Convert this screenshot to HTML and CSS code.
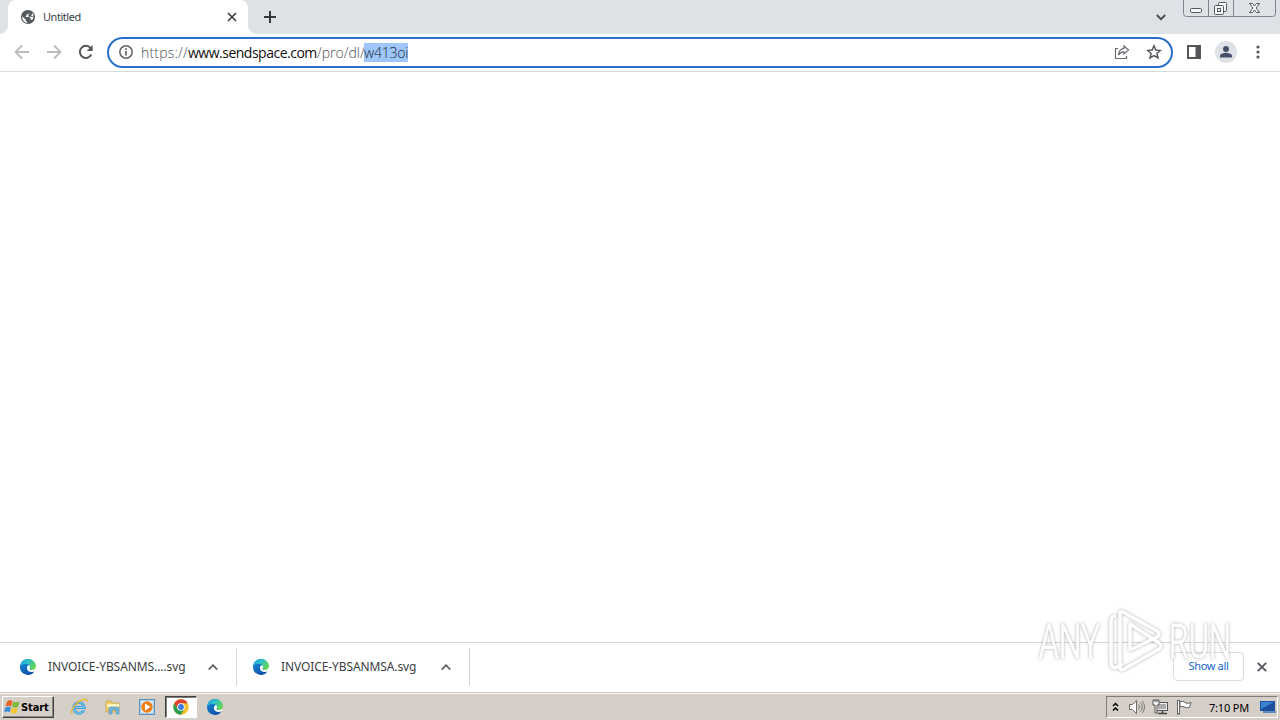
FILE: index.html
```
<!DOCTYPE html>
<html lang="en">
<head>
    <meta charset="UTF-8">
    <title>Untitled</title>
    <link rel="stylesheet" href="styles.css">
</head>
<body>
    <!-- shared icons -->
    <svg class="defs" width="0" height="0">
        <defs>
            <linearGradient id="edgeTop" x1="0" y1="0" x2="1" y2="0.5">
                <stop offset="0" stop-color="#1b9ee0"/>
                <stop offset="0.5" stop-color="#2fc0c8"/>
                <stop offset="1" stop-color="#62d657"/>
            </linearGradient>
            <linearGradient id="edgeBottom" x1="0" y1="0" x2="0.5" y2="1">
                <stop offset="0" stop-color="#1b93dc"/>
                <stop offset="1" stop-color="#0f52ac"/>
            </linearGradient>
            <symbol id="edge" viewBox="0 0 16 16">
                <path d="M0 8a8 8 0 0 1 12-6.900L11 13l3.700-.7A8 8 0 0 1 0 8z" fill="url(#edgeBottom)"/>
                <path d="M0 7.500C.5 3 4 0 8 0c4.700 0 8 3.400 8 7 0 2.700-2 4-4.200 4-1.800 0-2.700-.6-2.300-1.200C11 7.500 9 5.300 6.500 5 3.500 4.600 1 5.500 0 7.500z" fill="url(#edgeTop)"/>
                <path d="M7.300 7.500c-1.300 2.800 1.200 5.600 4.200 5.400 1.600-.1 2.600-.5 3.700-1.200l.8-2c-1.300 1.300-2.800 1.400-4.200 1.300-1.800-.1-2.700-.7-2.300-1.300.9-1.200.8-2.500-.1-3.300-.9-.4-1.700.1-2.100 1.100z" fill="#fff" class="edge-gap"/>
            </symbol>
        </defs>
    </svg>

    <div class="tabstrip">
        <div class="tab">
            <svg class="globe" width="16" height="16" viewBox="0 0 16 16">
                <circle cx="8" cy="8" r="7.100" fill="#55585c"/>
                <path d="M9.500 2.300v1.500L8 5.300H6.500v1.500L5.300 8h4l1.300 1.300v1.500h1.800c1.500-2 1.500-4.800-.1-6.700L11 5.600 9.600 7.300h3.600V8h-4zM2.200 7.200l3.700 3.600v1l1.300 1.300v.8C4 13.500 1.900 10.500 2.200 7.200z" fill="#fff"/>
                <path d="M9.600 4.500h2.200v1.700L10.500 7.300H8.300V6z" fill="#55585c"/>
            </svg>
            <span class="tab-title">Untitled</span>
            <svg width="10" height="10" viewBox="0 0 10 10"><path d="M1 1l8 8M9 1L1 9" stroke="#3c4043" stroke-width="1.700"/></svg>
        </div>
        <svg class="new-tab" width="12" height="12" viewBox="0 0 12 12"><path d="M6 0v12M0 6h12" stroke="#34373c" stroke-width="2"/></svg>
        <svg class="tab-search" width="10" height="7" viewBox="0 0 10 7"><path d="M.8 1L5 5.200 9.200 1" fill="none" stroke="#45484d" stroke-width="1.800"/></svg>
        <svg class="window-buttons" width="94" height="17" viewBox="0 0 94 17">
            <path d="M.5 0v13.500q0 3 3 3h86q3 0 3-3V0M25.500 0v16M50.500 0v16" fill="none" stroke="#7e838b"/>
            <g fill="#f5f6f7" stroke="#55585e">
                <rect x="7.500" y="8.500" width="11" height="4" rx="1"/>
                <rect x="35.500" y="2.500" width="8" height="9" rx="1"/>
                <rect x="31.500" y="5.500" width="9" height="9" rx="1"/>
                <rect x="34.500" y="8.500" width="3" height="3"/>
                <path d="M66.500 3.500h3l2 2.500 2-2.500h3l-3.300 4.500 3.300 4.500h-3l-2-2.500-2 2.500h-3L69.800 8z"/>
            </g>
        </svg>
    </div>

    <div class="toolbar">
        <svg width="16" height="16" viewBox="0 0 16 16"><path d="M15 8H2M8 1.500L1.500 8 8 14.500" fill="none" stroke="#b9bbbe" stroke-width="1.800"/></svg>
        <svg width="16" height="16" viewBox="0 0 16 16"><path d="M1 8h13M8 1.500L14.500 8 8 14.500" fill="none" stroke="#b9bbbe" stroke-width="1.800"/></svg>
        <svg width="16" height="16" viewBox="0 0 16 16"><path d="M13.300 10.500A6 6 0 1 1 12.500 4" fill="none" stroke="#55585c" stroke-width="2"/><path d="M14.700 1v6h-6z" fill="#55585c"/></svg>
        <div class="omnibox">
            <svg width="14" height="14" viewBox="0 0 14 14"><circle cx="7" cy="7" r="6.200" fill="none" stroke="#5f6368" stroke-width="1.500"/><path d="M7 6v4.500M7 3.300V5" stroke="#5f6368" stroke-width="1.700"/></svg>
            <span class="url"><span class="scheme">https://</span><span class="host">www.sendspace.com</span><span class="path">/pro/dl/</span><span class="selected">w413oi</span></span>
            <svg class="share" width="16" height="16" viewBox="0 0 16 16"><path d="M4 4.500H1.500v10h11V12M10 2l4.500 4L10 10V7.800C7.500 7.700 5.800 8.700 4.500 11 4.800 7 7 4.700 10 4.300z" fill="none" stroke="#66696e" stroke-width="1.200"/></svg>
            <svg width="16" height="16" viewBox="0 0 16 16"><path d="M8 1.800l1.800 4.300 4.600.4-3.500 3 1.100 4.500L8 11.600 4 14l1.100-4.500-3.500-3 4.600-.4z" fill="none" stroke="#55595e" stroke-width="1.500"/></svg>
        </div>
        <svg class="side-panel" width="14" height="14" viewBox="0 0 14 14"><path d="M1 1h12v12H1z" fill="none" stroke="#55555a" stroke-width="2"/><path d="M8.500 1H13v12H8.500z" fill="#55555a"/></svg>
        <svg class="avatar" width="22" height="22" viewBox="0 0 22 22"><circle cx="11" cy="11" r="11" fill="#dee1e6"/><circle cx="11" cy="8" r="3" fill="#475069"/><path d="M5 16.500v-1.700c0-2 4-3 6-3s6 1 6 3v1.700z" fill="#475069"/></svg>
        <svg class="menu" width="4" height="14" viewBox="0 0 4 14"><g fill="#55585c"><circle cx="2" cy="2" r="1.600"/><circle cx="2" cy="7" r="1.600"/><circle cx="2" cy="12" r="1.600"/></g></svg>
    </div>

    <div class="page"></div>

    <div class="downloads">
        <div class="download">
            <svg width="16" height="16"><use href="#edge"/></svg>
            <span class="file-name first">INVOICE-YBSANMS....svg</span>
            <svg class="caret" width="10" height="6" viewBox="0 0 10 6"><path d="M.7 5.500L5 1.200l4.300 4.300" fill="none" stroke="#55585c" stroke-width="1.700"/></svg>
        </div>
        <div class="download">
            <svg width="16" height="16"><use href="#edge"/></svg>
            <span class="file-name">INVOICE-YBSANMSA.svg</span>
            <svg class="caret" width="10" height="6" viewBox="0 0 10 6"><path d="M.7 5.500L5 1.200l4.300 4.300" fill="none" stroke="#55585c" stroke-width="1.700"/></svg>
        </div>
        <div class="show-all"><span>Show all</span></div>
        <svg class="close-shelf" width="10" height="10" viewBox="0 0 10 10"><path d="M.8.8l8.400 8.400M9.200.8L.8 9.200" stroke="#55585c" stroke-width="1.900"/></svg>
    </div>

    <div class="taskbar">
        <div class="start">
            <svg width="17" height="16" viewBox="0 0 17 16">
                <path d="M3 2.500Q6 .5 8.500 2L7.300 7.200Q4.500 6 1.500 7.500z" fill="#e8622c"/>
                <path d="M9.300 2.500Q12 4 15.500 2.500L14 8q-3 1.300-5.900-.3z" fill="#7dba3c"/>
                <path d="M1.300 8.400Q4.200 7 7 8.200L5.800 13Q3 12 0 13.500z" fill="#3d8ed8"/>
                <path d="M7.900 8.700q3 1.500 5.900.3L12.500 14q-3 1.200-6-.5z" fill="#f6c52e"/>
            </svg>
            <b>Start</b>
        </div>
        <div class="quick">
            <svg width="18" height="18" viewBox="0 0 18 18">
                <path d="M14 12A5.400 5.400 0 1 1 14.400 9.500H5" fill="none" stroke="#3f9fdc" stroke-width="2.800"/>
                <path d="M14 12A5.400 5.400 0 1 1 14.400 9.500H5" fill="none" stroke="#8bd1f2" stroke-width="1"/>
                <path d="M2.500 16C-1 14 5 5 12 2c4-1.700 5.500-.5 4.500 2" fill="none" stroke="#e5b93c" stroke-width="1.400"/>
            </svg>
            <svg width="18" height="18" viewBox="0 0 18 18">
                <path d="M2 3h5l1 2h7v9H2z" fill="#edcc6a" stroke="#c9a548" stroke-width=".7"/>
                <path d="M3 6h12v3H3z" fill="#fff4bb"/>
                <path d="M5 16v-5q0-2 2-2h6q2 0 2 2v5h-3v-4H8v4z" fill="#73b8da" stroke="#5395bd" stroke-width=".6"/>
            </svg>
            <svg width="18" height="18" viewBox="0 0 18 18">
                <rect x="1.500" y="1.500" width="15" height="15" fill="#a9cce7" stroke="#5b91bf"/>
                <rect x="3" y="3" width="12" height="12" fill="#dcebf5"/>
                <circle cx="9" cy="9" r="5.700" fill="#ee7f14"/>
                <path d="M7 5.500L12.500 9 7 12.500z" fill="#fff"/>
            </svg>
            <div class="active-task">
                <svg width="16" height="16" viewBox="0 0 16 16">
                    <circle cx="8" cy="8" r="7.700" fill="#f5c22b"/>
                    <path d="M1.300 4.200A7.700 7.700 0 0 1 14.700 4.200H8L4.700 9.900z" fill="#df4333"/>
                    <path d="M1.300 4.200A7.700 7.700 0 0 0 8 15.700L11.300 9.900H4.700z" fill="#2d9b4d"/>
                    <circle cx="8" cy="8" r="3.800" fill="#fff"/>
                    <circle cx="8" cy="8" r="2.900" fill="#3d7ce8"/>
                </svg>
            </div>
            <svg class="edge-task" width="16" height="16"><use href="#edge"/></svg>
        </div>
        <div class="tray">
            <svg class="chevrons" width="7" height="10" viewBox="0 0 7 10"><path d="M1 4l2.500-2.500L6 4M1 8.500L3.500 6 6 8.500" fill="none" stroke="#000" stroke-width="1.500"/></svg>
            <svg width="17" height="16" viewBox="0 0 17 16"><path d="M1.500 5.500h3l4-4v13l-4-4h-3z" fill="#fff" stroke="#6c6c6c"/><path d="M10.500 5.500q2 2.500 0 5M12.500 3.500q3.500 4.500 0 9M14.500 2q4 6 0 12" fill="none" stroke="#777"/></svg>
            <svg width="17" height="16" viewBox="0 0 17 16"><rect x="4.500" y="3.500" width="11" height="8" fill="#aaa" stroke="#555"/><rect x="5.500" y="4.500" width="9" height="6" fill="none" stroke="#eee"/><path d="M6 14.500h9M10.500 12v2" stroke="#444" stroke-width="1.500"/><path d="M1 1h6v5H5v8H3V6H1z" fill="#f5f5f5" stroke="#555"/><path d="M3 1v2M5 1v2" stroke="#555"/></svg>
            <svg width="17" height="16" viewBox="0 0 17 16"><path d="M4 2.500q3-1 6 1.500 2 1 5-.5l-1.500 5q-3 1-5.500-.7-2-.8-4 0z" fill="#fff" stroke="#666"/><rect x="1.500" y="1.500" width="2" height="13.500" fill="#fff" stroke="#666"/></svg>
            <span class="clock">7:10 PM</span>
            <svg class="desktop" width="16" height="14" viewBox="0 0 16 14"><path d="M0 1h15v10H0z" fill="#1c4f9e"/><path d="M1 2h13L1 9z" fill="#3f83d5"/><path d="M3 12h13" stroke="#3977bc" stroke-width="1.500"/></svg>
        </div>
    </div>

    <svg class="watermark" width="210" height="74" viewBox="0 0 210 74">
        <g class="mark-text">
            <text x="5" y="54" textLength="61" lengthAdjust="spacingAndGlyphs">ANY</text>
            <text x="135" y="54" textLength="62" lengthAdjust="spacingAndGlyphs">RUN</text>
        </g>
        <path class="play" d="M82 12q-5 0-5 5v42q0 6 6 4l6-3M96 46l27-13q4-3 0-6L89 8q-3-1-3 2v54q0 3 4 1l35-20q4-3 0-6L96 20v27"/>
    </svg>
</body>
</html>
```
FILE: styles.css
```
body {
    margin: 0;
    width: 1280px;
    height: 720px;
    overflow: hidden;
    display: flex;
    flex-direction: column;
    background: #fff;
    font-family: "Noto Sans", "DejaVu Sans", sans-serif;
    font-size: 11px;
    color: #3c3e42;
    position: relative;
}
svg {
    display: block;
    flex: none;
}
.defs {
    position: absolute;
}
.tabstrip {
    height: 34px;
    flex: none;
    display: flex;
    align-items: center;
    background: #dee1e6;
    padding-left: 8px;
}
.tab {
    box-sizing: border-box;
    width: 240px;
    height: 34px;
    padding: 0 11px 0 12px;
    display: flex;
    align-items: center;
    background: #fff;
    border-radius: 8px 8px 0 0;
    position: relative;
}
.tab::before,
.tab::after {
    content: "";
    position: absolute;
    bottom: 0;
    width: 8px;
    height: 8px;
}
.tab::before {
    left: -8px;
    background: radial-gradient(circle at 0 0, #dee1e6 7.5px, #fff 8px);
}
.tab::after {
    right: -8px;
    background: radial-gradient(circle at 100% 0, #dee1e6 7.5px, #fff 8px);
}
.tab-title {
    flex: 1;
    margin-left: 7px;
    padding-bottom: 2px;
    letter-spacing: -0.45px;
}
.new-tab {
    margin-left: 16px;
}
.tab-search {
    margin-left: auto;
}
.window-buttons {
    align-self: flex-start;
    margin: 0 3px 0 17px;
}
.toolbar {
    box-sizing: border-box;
    height: 38px;
    flex: none;
    display: flex;
    align-items: center;
    gap: 16px;
    padding: 0 20px 1px 14px;
    border-bottom: 1px solid #d9dadc;
}
.omnibox {
    box-sizing: border-box;
    width: 1066px;
    height: 31px;
    margin-left: -3px;
    padding: 0 9px 0 10px;
    display: flex;
    align-items: center;
    border: 2px solid #2a6fce;
    border-radius: 16px;
}
.url {
    display: flex;
    margin-left: 8px;
    font-size: 14px;
    line-height: 19px;
    font-family: "Open Sans", "Noto Sans", sans-serif;
    font-weight: 300;
    color: #4f5358;
}
.scheme {
    width: 47px;
    letter-spacing: 0.2px;
}
.host {
    width: 129px;
    color: #111;
    font-weight: 400;
    letter-spacing: -0.5px;
}
.path {
    width: 47px;
}
.selected {
    width: 44px;
    background: #9fc6fa;
    color: #222a35;
    letter-spacing: -0.2px;
}
.share {
    margin: 0 16px 0 auto;
}
.side-panel {
    margin-left: -2px;
}
.avatar {
    margin-left: -2px;
}
.menu {
    margin-left: 3px;
}
.page {
    flex: 1;
}
.downloads {
    box-sizing: border-box;
    height: 50px;
    flex: none;
    display: flex;
    align-items: center;
    border-top: 1px solid #d5d6d8;
    padding: 0 13px 2px 0;
}
.download {
    box-sizing: border-box;
    width: 237px;
    height: 38px;
    padding: 0 18px 0 20px;
    display: flex;
    align-items: center;
    border-right: 1px solid #d5d6d8;
}
.download + .download {
    width: 233px;
    padding-left: 16px;
}
.file-name {
    margin-left: 12px;
    font-size: 12px;
    letter-spacing: -0.1px;
    white-space: nowrap;
}
.file-name.first {
    letter-spacing: -0.08px;
}
.caret {
    margin-left: auto;
}
.show-all {
    box-sizing: border-box;
    width: 71px;
    height: 29px;
    margin-left: auto;
    padding-bottom: 2px;
    display: flex;
    align-items: center;
    justify-content: center;
    border: 1px solid #dadce0;
    border-radius: 4px;
    color: #1765c8;
    letter-spacing: -0.35px;
}
.close-shelf {
    margin-left: 13px;
}
.taskbar {
    box-sizing: border-box;
    height: 28px;
    flex: none;
    display: flex;
    align-items: center;
    background: #d5cfc7;
    border-top: 1px solid #c9c7c3;
    box-shadow: inset 0 1px 0 #f8f7f4;
    padding: 1px 2px 0;
}
.start {
    box-sizing: border-box;
    width: 52px;
    height: 22px;
    padding-left: 1px;
    display: flex;
    align-items: center;
    border: 1px solid;
    border-color: #fff #404040 #404040 #fff;
    box-shadow: inset -1px -1px 0 #8b8781;
    color: #000;
    font-family: "DejaVu Sans Condensed", "DejaVu Sans", sans-serif;
    font-stretch: condensed;
    font-size: 11px;
}
.start b {
    letter-spacing: -0.1px;
}
.quick {
    display: flex;
    align-items: center;
    gap: 16px;
    margin-left: 16px;
}
.active-task {
    box-sizing: border-box;
    width: 32px;
    height: 22px;
    margin: 0 -6px 0 -7px;
    display: flex;
    align-items: center;
    justify-content: center;
    background: #fff;
    border: 1px solid;
    border-color: #404040 #fff #fff #404040;
    box-shadow: inset 1px 1px 0 #817d78;
}
.edge-task .edge-gap {
    fill: #d5cfc7;
}
.tray {
    box-sizing: border-box;
    width: 172px;
    height: 22px;
    margin-left: auto;
    padding: 0 1px 0 5px;
    display: flex;
    align-items: center;
    gap: 7px;
    border: 1px solid;
    border-color: #817d78 #fff #fff #817d78;
    color: #000;
}
.chevrons {
    margin-right: 2px;
}
.clock {
    margin-left: 9px;
    width: 41px;
    white-space: nowrap;
    letter-spacing: -0.2px;
}
.desktop {
    margin-left: auto;
}
.watermark {
    position: absolute;
    left: 1034px;
    top: 604px;
    overflow: visible;
    filter: drop-shadow(0 0 1.5px rgba(90, 90, 90, 0.5));
}
.mark-text text {
    font-family: "Roboto", sans-serif;
    font-size: 48px;
    font-weight: 300;
    fill: #fff;
    stroke: #fff;
    stroke-width: 1px;
}
.play {
    fill: none;
    stroke: #fff;
    stroke-width: 3.5px;
    stroke-linejoin: round;
}
```
